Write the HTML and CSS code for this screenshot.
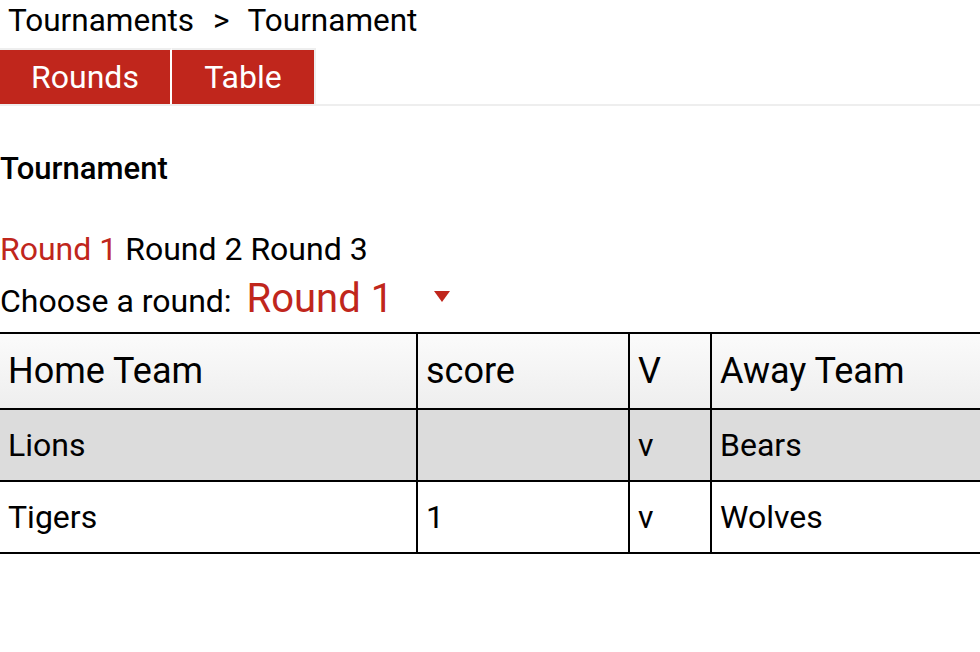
FILE: index.html
```html
<!DOCTYPE html>
<html lang="en">
<head>
<meta charset="utf-8">
<title>Tournament</title>
<link rel="stylesheet" href="styles.css">
</head>
<body>
<div class="breadcrumb"><a class="crumb">Tournaments</a><span class="sep">&gt;</span><span class="crumb">Tournament</span></div>
<nav class="tabs">
  <a class="tab tab-rounds">Rounds</a>
  <a class="tab tab-table">Table</a>
</nav>
<h2 class="title">Tournament</h2>
<div class="round-links"><a class="round active">Round 1</a> <a class="round">Round 2</a> <a class="round">Round 3</a></div>
<div class="chooser">
  <label class="chooser-label">Choose a round:</label>
  <div class="select">
    <span class="select-value">Round 1</span>
    <span class="select-arrow"></span>
  </div>
</div>
<table class="fixtures">
  <colgroup>
    <col class="c-home">
    <col class="c-score">
    <col class="c-v">
    <col class="c-away">
  </colgroup>
  <thead>
    <tr><th>Home Team</th><th>score</th><th>V</th><th>Away Team</th></tr>
  </thead>
  <tbody>
    <tr class="alt"><td>Lions</td><td></td><td>v</td><td>Bears</td></tr>
    <tr><td>Tigers</td><td>1</td><td>v</td><td>Wolves</td></tr>
  </tbody>
</table>
</body>
</html>
```

FILE: styles.css
```css
html, body {
  margin: 0;
  padding: 0;
  background: #fff;
}
body {
  font-family: Roboto, "Liberation Sans", sans-serif;
  color: #000;
  width: 1100px;
}
.breadcrumb {
  font-size: 31.5px;
  line-height: 36px;
  padding: 3px 0 0 8px;
  height: 45px;
  box-sizing: border-box;
  margin-bottom: 3px;
  display: flex;
}
.breadcrumb .sep {
  margin: 0 18px 0 19px;
}
.tabs {
  display: flex;
  border-bottom: 2px solid #eeeeee;
}
.tab {
  display: block;
  height: 54px;
  line-height: 54px;
  background: #c0261c;
  color: #fff;
  font-size: 32px;
  text-align: center;
  border-top: 2px solid #eeeeee;
}
.tab-rounds {
  width: 170px;
  border-right: 2px solid #fff;
}
.tab-table {
  width: 142px;
  border-right: 2px solid #eeeeee;
}
.title {
  margin: 45px 0 0 0;
  font-size: 31px;
  font-weight: 500;
  line-height: 36px;
}
.round-links {
  margin-top: 44px;
  font-size: 32px;
  line-height: 36px;
}
.round.active {
  color: #c0261c;
}
.chooser {
  margin-top: 10px;
  display: flex;
  align-items: baseline;
  height: 44px;
  line-height: 44px;
}
.chooser-label {
  font-size: 32px;
}
.select {
  display: flex;
  align-items: center;
  margin-left: 15px;
  width: 215px;
}
.select-value {
  font-size: 40px;
  color: #c0261c;
}
.select-arrow {
  margin-left: 41px;
  width: 0;
  height: 0;
  border-left: 8px solid transparent;
  border-right: 8px solid transparent;
  border-top: 11px solid #c0261c;
  align-self: flex-start;
  margin-top: 14px;
}
.fixtures {
  margin-top: 11px;
  border-collapse: separate;
  border-spacing: 0;
  table-layout: fixed;
  width: 1100px;
  border-top: 2px solid #000;
  font-size: 32px;
}
.c-home { width: 418px; }
.c-score { width: 212px; }
.c-v { width: 82px; }
.c-away { width: 388px; }
.fixtures th,
.fixtures td {
  box-sizing: border-box;
  border-right: 2px solid #000;
  border-bottom: 2px solid #000;
  padding: 0 8px;
  text-align: left;
  vertical-align: middle;
  font-weight: 400;
}
.fixtures th {
  height: 76px;
  font-size: 36px;
  background: linear-gradient(#fbfbfb, #eeeeee);
}
.fixtures td {
  height: 72px;
}
.fixtures tr.alt td {
  background: #dcdcdc;
}
```
